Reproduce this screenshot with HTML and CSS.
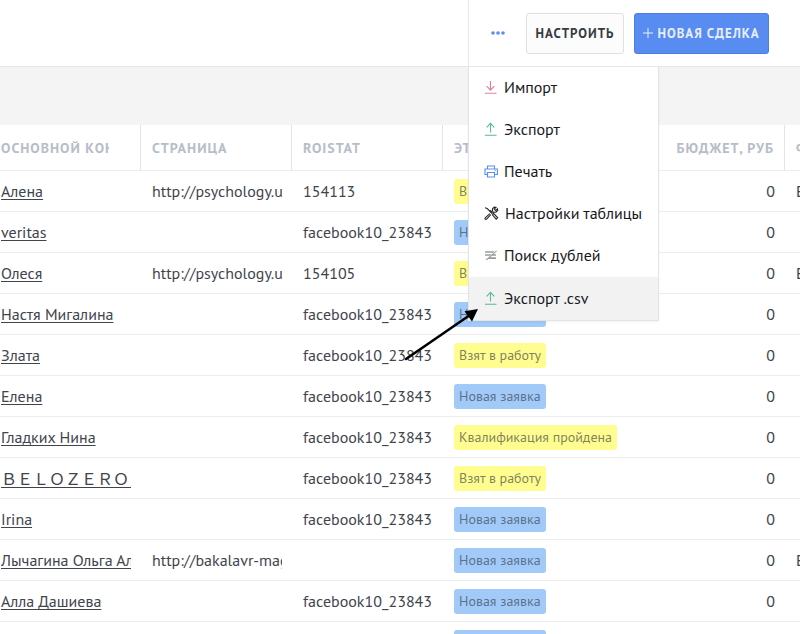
FILE: index.html
```
<!DOCTYPE html>
<html lang="ru">
<head>
    <meta charset="UTF-8">
    <meta name="viewport" content="width=device-width, initial-scale=1.0">
    <title>Сделки</title>
    <link rel="stylesheet" href="styles.css">
</head>
<body>
    <div class="page">
        <header class="topbar">
            <div class="actions">
                <button class="more" type="button" aria-label="Ещё">
                    <svg width="14" height="4" viewBox="0 0 14 4" fill="#5a8df0"><circle cx="2" cy="2" r="1.8"/><circle cx="7" cy="2" r="1.8"/><circle cx="12" cy="2" r="1.8"/></svg>
                </button>
                <button class="btn" type="button">Настроить</button>
                <button class="btn btn-primary" type="button">
                    <svg width="10" height="10" viewBox="0 0 10 10" stroke="#e6eeff" stroke-width="1"><path d="M5 0v10M0 5h10"/></svg>
                    Новая сделка
                </button>

                <!-- Menu -->
                <div class="menu">
                    <button class="menu-item" type="button">
                        <svg width="14" height="14" viewBox="0 0 14 14" fill="none" stroke="#dc7f9f" stroke-width="1.1"><path d="M6.5 1v9M2.7 6.2l3.8 4 3.8-4M1 13.3h11.5"/></svg>
                        Импорт
                    </button>
                    <button class="menu-item" type="button">
                        <svg width="14" height="14" viewBox="0 0 14 14" fill="none" stroke="#58bb91" stroke-width="1.1"><path d="M6.5 10.5v-9M2.7 5.3l3.8-4 3.8 4M1 13.3h11.5"/></svg>
                        Экспорт
                    </button>
                    <button class="menu-item" type="button">
                        <svg width="14" height="14" viewBox="0 0 14 14" fill="none" stroke="#5a8df0" stroke-width="1.1"><path d="M3.5 5V2h7v3M3.5 10.5H1V5h12.4v5.5h-2.9M3.5 8.5h7v4.5h-7zM10.5 6.8h1.2"/></svg>
                        Печать
                    </button>
                    <button class="menu-item" type="button">
                        <svg width="15" height="14" viewBox="0 0 15 14" fill="none" stroke="#26292c" stroke-width="1.1"><path d="M1 1.8l2.2.7 5 5.2M8 6.2l-2-2M5.8 7.6L1.2 11.8a.9.9 0 0 0 1.4 1.3l4.2-4.5M8.2 7.2l1.2-1.1 2.5.1 1.8-1.7-.2-1.6-1.8 1.5-1.4-1.3 1.6-1.7-1.7-.2-1.7 1.6v2.3L7 6.4M8.4 8.8l1.3-1.2 4 4.2-1.5 1.4z"/></svg>
                        Настройки таблицы
                    </button>
                    <button class="menu-item" type="button">
                        <svg width="14" height="14" viewBox="0 0 14 14"><path d="M1 3.3h9.5L9 4.8H1zM1 6.3h6.5L6 7.8H1zM9.2 6.3H12v1.5H7.6zM5.6 9.3H12v1.6H4zM12.3 2.6l.6.7-9.8 8.6H1.3z" fill="#969da1"/></svg>
                        Поиск дублей
                    </button>
                    <button class="menu-item active" type="button">
                        <svg width="14" height="14" viewBox="0 0 14 14" fill="none" stroke="#58bb91" stroke-width="1.1"><path d="M6.5 10.5v-9M2.7 5.3l3.8-4 3.8 4M1 13.3h11.5"/></svg>
                        Экспорт .csv
                    </button>
                    <svg class="pointer" width="76" height="56" viewBox="0 0 76 56"><path d="M2 53L66 9" stroke="#000" stroke-width="2.6" stroke-linecap="round"/><path d="M74 3L60.5 5.2l7.5 10.4z"/></svg>
                </div>
            </div>
        </header>

        <main class="list">
            <table class="deals">
                <colgroup>
                    <col class="col-contact">
                    <col class="col-text">
                    <col class="col-text">
                    <col>
                    <col class="col-text">
                    <col class="col-text">
                </colgroup>
                <thead>
                    <tr>
                        <th><span class="contact-title">Основной контакт</span></th>
                        <th>Страница</th>
                        <th>Roistat</th>
                        <th>Этап сделки</th>
                        <th class="num">Бюджет, руб</th>
                        <th>Форма</th>
                    </tr>
                </thead>
                <tbody>
                    <tr>
                        <td><a href="#">Алена</a></td>
                        <td><div class="clip">http://psychology.u</div></td>
                        <td>154113</td>
                        <td><span class="tag yellow">Взят в работу</span></td>
                        <td class="num">0</td>
                        <td>Ев</td>
                    </tr>
                    <tr>
                        <td><a href="#">veritas</a></td>
                        <td></td>
                        <td><div class="clip">facebook10_238431</div></td>
                        <td><span class="tag blue">Новая заявка</span></td>
                        <td class="num">0</td>
                        <td></td>
                    </tr>
                    <tr>
                        <td><a href="#">Олеся</a></td>
                        <td><div class="clip">http://psychology.u</div></td>
                        <td>154105</td>
                        <td><span class="tag yellow">Взят в работу</span></td>
                        <td class="num">0</td>
                        <td>Ев</td>
                    </tr>
                    <tr>
                        <td><a href="#">Настя Мигалина</a></td>
                        <td></td>
                        <td><div class="clip">facebook10_238431</div></td>
                        <td><span class="tag blue">Новая заявка</span></td>
                        <td class="num">0</td>
                        <td></td>
                    </tr>
                    <tr>
                        <td><a href="#">Злата</a></td>
                        <td></td>
                        <td><div class="clip">facebook10_238431</div></td>
                        <td><span class="tag yellow">Взят в работу</span></td>
                        <td class="num">0</td>
                        <td></td>
                    </tr>
                    <tr>
                        <td><a href="#">Елена</a></td>
                        <td></td>
                        <td><div class="clip">facebook10_238431</div></td>
                        <td><span class="tag blue">Новая заявка</span></td>
                        <td class="num">0</td>
                        <td></td>
                    </tr>
                    <tr>
                        <td><a href="#">Гладких Нина</a></td>
                        <td></td>
                        <td><div class="clip">facebook10_238431</div></td>
                        <td><span class="tag yellow">Квалификация пройдена</span></td>
                        <td class="num">0</td>
                        <td></td>
                    </tr>
                    <tr>
                        <td><div class="clip"><a class="wide" href="#">ＢＥＬＯＺＥＲＯＶＡ</a></div></td>
                        <td></td>
                        <td><div class="clip">facebook10_238431</div></td>
                        <td><span class="tag yellow">Взят в работу</span></td>
                        <td class="num">0</td>
                        <td></td>
                    </tr>
                    <tr>
                        <td><a href="#">Irina</a></td>
                        <td></td>
                        <td><div class="clip">facebook10_238431</div></td>
                        <td><span class="tag blue">Новая заявка</span></td>
                        <td class="num">0</td>
                        <td></td>
                    </tr>
                    <tr>
                        <td><div class="clip"><a href="#">Лычагина Ольга Ал</a></div></td>
                        <td><div class="clip">http://bakalavr-mag</div></td>
                        <td></td>
                        <td><span class="tag blue">Новая заявка</span></td>
                        <td class="num">0</td>
                        <td>Ев</td>
                    </tr>
                    <tr>
                        <td><a href="#">Алла Дашиева</a></td>
                        <td></td>
                        <td><div class="clip">facebook10_238431</div></td>
                        <td><span class="tag blue">Новая заявка</span></td>
                        <td class="num">0</td>
                        <td></td>
                    </tr>
                    <tr>
                        <td></td>
                        <td></td>
                        <td></td>
                        <td><span class="tag blue">Новая заявка</span></td>
                        <td class="num"></td>
                        <td></td>
                    </tr>
                </tbody>
            </table>
        </main>
    </div>
</body>
</html>
```
FILE: styles.css
```
* {
    box-sizing: border-box;
}

body {
    margin: 0;
    font-family: "PT Sans", "Noto Sans", sans-serif;
    font-size: 16px;
    line-height: 20px;
    color: #3f444d;
    background: #f4f4f4;
}

button {
    font-family: inherit;
    cursor: pointer;
}

.page {
    height: 100vh;
    overflow: hidden;
}

.topbar {
    display: flex;
    justify-content: flex-end;
    height: 67px;
    background: #fff;
    border-bottom: 1px solid #e8e8e8;
}

.actions {
    position: relative;
    display: flex;
    align-items: center;
    width: 332px;
    padding-right: 31px;
    border-left: 1px solid #e8e8e8;
}

.more {
    display: flex;
    justify-content: center;
    flex: 1;
    padding: 8px 0;
    border: none;
    background: none;
}

.btn {
    display: flex;
    align-items: center;
    justify-content: center;
    gap: 4px;
    width: 98px;
    height: 41px;
    padding: 0;
    border: 1px solid #dfe0e1;
    border-radius: 3px;
    background: #fcfcfc;
    color: #363b44;
    font-size: 13px;
    font-weight: bold;
    letter-spacing: 1px;
    text-transform: uppercase;
    white-space: nowrap;
}

.btn-primary {
    width: 135px;
    margin-left: 10px;
    background: #588cf0;
    border-color: #4b7ee3;
    color: #e6eeff;
}

/* Menu */
.menu {
    position: absolute;
    top: 67px;
    left: -1px;
    width: 191px;
    background: #fff;
    border: 1px solid #e4e4e4;
    border-top: none;
    box-shadow: 0 1px 2px rgba(0, 0, 0, 0.06);
}

.menu-item {
    display: flex;
    align-items: center;
    gap: 6px;
    width: 100%;
    height: 42px;
    padding: 0 15px 2px;
    border: none;
    background: none;
    color: #17191c;
    font-size: 16px;
    text-align: left;
    white-space: nowrap;
}

.menu-item.active {
    height: 43px;
    background: #f2f2f2;
}

.pointer {
    position: absolute;
    left: -65px;
    bottom: -42px;
    pointer-events: none;
}

/* Table */
.list {
    padding-top: 58px;
    overflow: hidden;
}

.deals {
    width: calc(100% + 136px);
    table-layout: fixed;
    border-collapse: separate;
    border-spacing: 0;
    background: #fff;
}

.col-contact {
    width: 141px;
}

.col-text {
    width: 151px;
}

.deals th,
.deals td {
    padding: 0 10px 0 11px;
    border-bottom: 1px solid #ececec;
    text-align: left;
    white-space: nowrap;
}

.deals th {
    height: 46px;
    border-right: 1px solid #e4e4e4;
    color: #b7bdc9;
    font-size: 14px;
    font-weight: bold;
    letter-spacing: 1px;
    text-transform: uppercase;
}

.deals td {
    height: 41px;
}

.deals th:first-child,
.deals td:first-child {
    padding-left: 1px;
}

.deals .num {
    text-align: right;
}

.contact-title {
    display: block;
    width: 108px;
    overflow: hidden;
}

.clip {
    overflow: hidden;
}

.deals a {
    color: #3f444d;
    text-underline-offset: 2px;
}

.deals .wide {
    font-family: "Noto Sans CJK JP", sans-serif;
}

.tag {
    display: inline-block;
    height: 25px;
    padding: 0 5px;
    border-radius: 3px;
    color: rgba(54, 59, 68, 0.65);
    font-size: 14px;
    line-height: 25px;
    vertical-align: middle;
}

.yellow {
    background: #fffd8f;
}

.blue {
    background: #a1caf9;
}
```
